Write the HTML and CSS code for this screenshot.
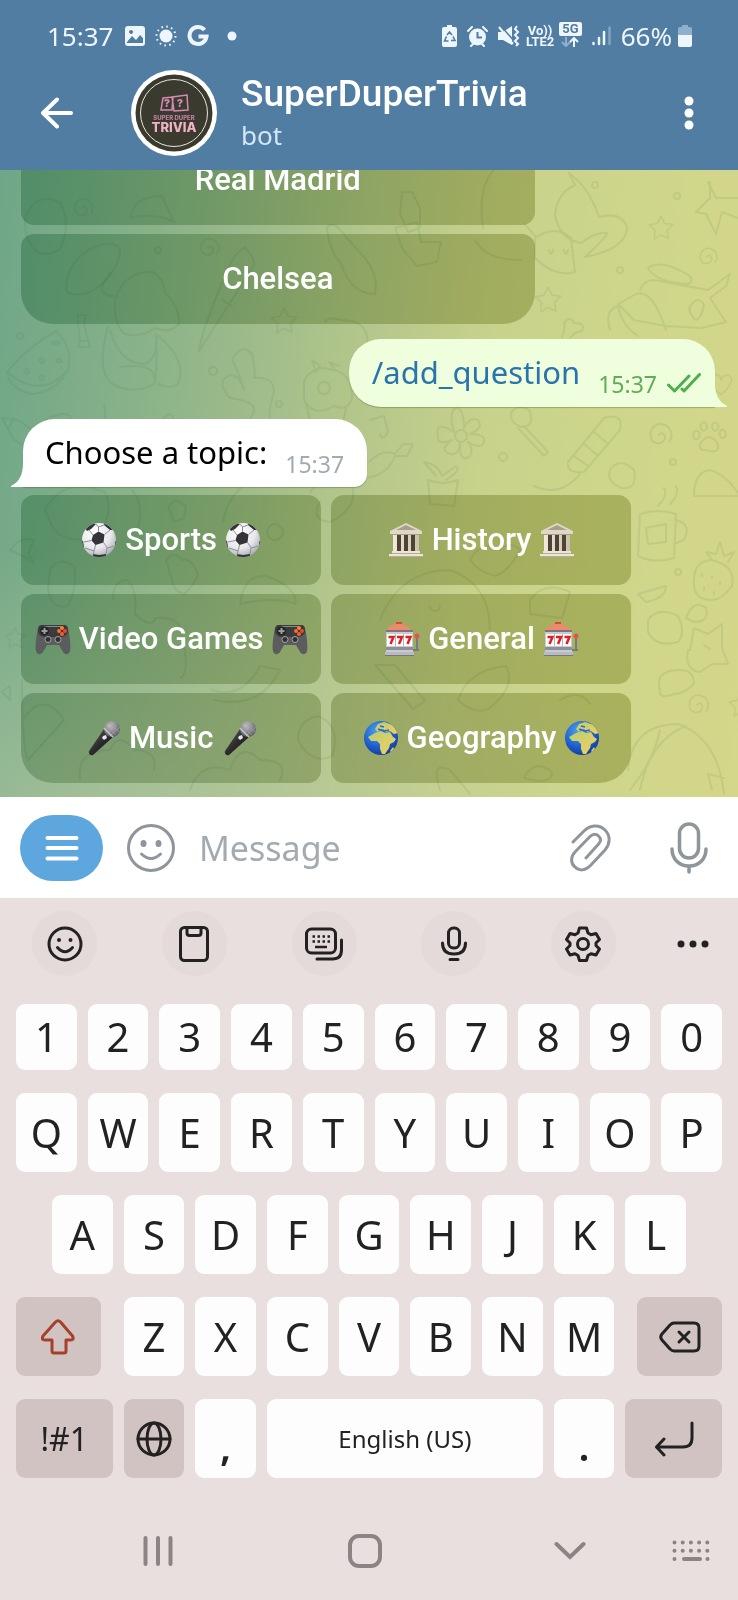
FILE: index.html
```html
<!DOCTYPE html>
<html lang="en">
<head>
<meta charset="utf-8">
<meta name="viewport" content="width=device-width, initial-scale=1">
<title>SuperDuperTrivia</title>
<link rel="stylesheet" href="styles.css">
</head>
<body>
<svg class="defs" aria-hidden="true">
  <defs>
    <radialGradient id="ballShade" cx=".4" cy=".3" r=".75"><stop offset="0" stop-color="#fff"/><stop offset=".6" stop-color="#e9e9ec"/><stop offset="1" stop-color="#a5a5ac"/></radialGradient>
    <radialGradient id="seaShade" cx=".4" cy=".3" r=".75"><stop offset="0" stop-color="#4fa3e8"/><stop offset=".6" stop-color="#1f5fd0"/><stop offset="1" stop-color="#123a94"/></radialGradient>
    <linearGradient id="landShade" x1="0" y1="0" x2="1" y2="1"><stop offset="0" stop-color="#b9cf72"/><stop offset="1" stop-color="#f2cf63"/></linearGradient>
    <linearGradient id="stoneShade" x1="0" y1="0" x2="1" y2="0"><stop offset="0" stop-color="#f1eadb"/><stop offset="1" stop-color="#c9c0ab"/></linearGradient>
    <linearGradient id="handleShade" x1="0" y1="0" x2="1" y2="1"><stop offset="0" stop-color="#6d6d70"/><stop offset=".5" stop-color="#2c2c2f"/><stop offset="1" stop-color="#111"/></linearGradient>
    <radialGradient id="micShade" cx=".4" cy=".3" r=".7"><stop offset="0" stop-color="#c4c4c8"/><stop offset="1" stop-color="#5e5e63"/></radialGradient>
    <clipPath id="ballClip"><circle cx="18" cy="18" r="17"/></clipPath>
    <symbol id="ball" viewBox="0 0 36 36">
      <circle cx="18" cy="18" r="17" fill="url(#ballShade)"/>
      <g clip-path="url(#ballClip)">
        <path fill="#34353b" d="M12 13l5.500-3.500 6 3-1 8-8 2.500-4-4.500zM10 0l5 2-5 5-4 2-3-5zM24 0l-1 3 6 5 4 0 0-8zM-1 17l3 2 1 6-2 4-3-4zM37 16l-3 4 0 5 4 1zM12 32l6 1 7-1 0 4-13 0z"/>
        <path fill="none" stroke="#8c8d93" stroke-width="1" d="M12 13L8 8M17.500 9.500V5L15 2M17.500 5L23 3M23.500 12.500L29 8M22.500 20.500l4 5.500 7-2M14.500 23L13 29l-1 4M10.500 18.500L3 20M13 29l-9-3M26 26l-1 6"/>
      </g>
    </symbol>
    <symbol id="temple" viewBox="0 0 36 36">
      <path fill="#4e4335" d="M7 12h22v18H7z"/>
      <path fill="#dfd8c6" d="M18 1L34 9v3H2V9z"/><path fill="#a89f8b" d="M18 3l10 5H8zM4 12h28v1H4z"/>
      <path fill="url(#stoneShade)" d="M5 13h4v17H5zM13 13h3v17h-3zM20 13h3v17h-3zM27 13h4v17h-4z"/>
      <path fill="#ede6d6" d="M4 29h28v3H4zM1 32h34v3H1z"/><path fill="#b6ad98" d="M4 31h28v1H4zM1 34h34v1H1z"/>
    </symbol>
    <symbol id="pad" viewBox="0 0 36 36">
      <path fill="#5a5c5e" d="M7 4h22c3 0 4 2 5 8 1 7 2 14 1 18-1 4-5 4-7 1l-4-7H12l-4 7c-2 3-6 3-7-1-1-4 0-11 1-18C3 6 4 4 7 4z"/>
      <path fill="#3a3b3d" d="M7 4h22c3 0 4 2 4 6 0 4-4 6-8 6H11c-4 0-8-2-8-6 0-4 1-6 4-6z"/>
      <path fill="#88898c" d="M9 5h18v1H9z"/>
      <circle cx="9.500" cy="10" r="4.500" fill="#232426"/><path stroke="#9b9c9f" stroke-width="2" d="M9.500 7v6M6.500 10h6"/>
      <circle cx="27" cy="7" r="2" fill="#ff7a3c"/><circle cx="27" cy="13" r="2" fill="#ff5a24"/><circle cx="24" cy="10" r="2" fill="#ff6a30"/><circle cx="30" cy="10" r="2" fill="#e84a1c"/>
      <g fill="#303133" stroke="#a3a4a7"><circle cx="13" cy="18.500" r="3"/><circle cx="23" cy="18.500" r="3"/></g>
    </symbol>
    <symbol id="slots" viewBox="0 0 36 36">
      <path fill="#d9483b" d="M12 1h6v4h-6z"/>
      <path fill="#ee8a6c" d="M3 10c1-5 6-7 12-7s11 2 12 7z"/><path fill="#77777d" d="M2 9h27v2H2z"/>
      <path fill="#c9cbd0" d="M2 11h27v20H2z"/><path fill="#fff" d="M3 13h25v12H3z"/>
      <path stroke="#b4b6bc" d="M11.500 13v12M19.500 13v12"/>
      <path fill="none" stroke="#e01f1f" stroke-width="2.500" d="M4.500 16h5l-3 7M13 16h5l-3 7M21.500 16h5l-3 7"/>
      <path fill="#8d9097" d="M2 26h27v3H2z"/><path fill="#b9bbc2" d="M1 31h29v4H1z"/><path fill="#75777e" d="M1 34h29v1H1z"/>
      <path stroke="#777a82" stroke-width="2" d="M33 16v12M29 29h6"/><circle cx="33" cy="15" r="2.500" fill="#e2564a"/>
    </symbol>
    <symbol id="mic" viewBox="0 0 36 36">
      <path fill="url(#handleShade)" d="M19 9l9 8L8 35c-2 1-5-1-4-4z"/>
      <circle cx="27" cy="9" r="8" fill="url(#micShade)"/>
      <path fill="none" stroke="#9a9aa0" stroke-width=".7" d="M21 6l10 9M24 3l10 9M21 12L31 2M25 16L35 7"/>
      <path stroke="#c3c3c7" stroke-width="1.500" d="M19 8l9 9"/><path fill="#e7e7ea" d="M18 16l3-1 1 3-3 2-2-2z"/>
    </symbol>
    <symbol id="globe" viewBox="0 0 36 36">
      <circle cx="18" cy="18" r="17" fill="url(#seaShade)"/>
      <g clip-path="url(#ballClip)" fill="url(#landShade)">
        <path d="M12 13l6-2 4 2 5-1 3 5 3 2-2 3-4 2-1 4-4 6-3 0-2-5 0-5-3-3-6 0-3-4z"/>
        <path d="M12 9l3-5 6-2 9 3 5 8-4 1-4-3-4 1-3-3-4 1-1 2z"/><path d="M27 31l3-4 1 2-2 4z"/>
      </g>
      <path fill="none" stroke="#2a68cc" stroke-width="1.500" d="M15 9l6 2 5-1M17 6l4 1"/>
    </symbol>
    <symbol id="dStar" viewBox="-20 -20 40 40"><path d="M0-16l5 10 11 1-8 8 2 11-10-5-9 6 1-12-8-7 11-2z"/></symbol>
    <symbol id="dSwirl" viewBox="-20 -20 40 40"><path d="M0 0c3-5 9 1 5 6S-9 9-9 0-2-13 5-11s11 11 6 18"/></symbol>
    <symbol id="dHeart" viewBox="-20 -20 40 40"><path d="M0 14C-22 0-14-16-4-12 0-10 0-6 0-5c2-9 14-9 14 0 0 6-8 14-14 19z"/></symbol>
    <symbol id="dPaw" viewBox="-20 -20 40 40"><path d="M-7 12c-5-4 1-10 6-12 6 0 12 7 9 12-3 4-10 0-15 0z"/><ellipse cx="-12" cy="-2" rx="3" ry="4"/><ellipse cx="-5" cy="-10" rx="3" ry="4"/><ellipse cx="6" cy="-10" rx="3" ry="4"/><ellipse cx="13" cy="-3" rx="3" ry="4"/></symbol>
  </defs>
</svg>

<header class="header">
  <div class="status">
    <span class="clock">15:37</span>
    <svg width="20" height="20" viewBox="0 0 20 20"><path fill="#eef6fd" fill-rule="evenodd" d="M3 0h14a3 3 0 0 1 3 3v14a3 3 0 0 1-3 3H3a3 3 0 0 1-3-3V3a3 3 0 0 1 3-3zM2 16l5-6 4 4 4-5 3 3v5H2zM6 4a2 2 0 1 0 .1 0z"/></svg>
    <svg width="22" height="22" viewBox="0 0 22 22"><circle cx="11" cy="11" r="6.500" fill="#eef6fd"/><circle cx="11" cy="11" r="9.500" fill="none" stroke="#eef6fd" stroke-width="2" stroke-dasharray="1.600 3.370"/></svg>
    <svg width="22" height="22" viewBox="0 0 22 22"><path fill="none" stroke="#eef6fd" stroke-width="4" d="M17.500 5A8.500 8.500 0 1 0 19.500 11.500H11.500"/></svg>
    <svg class="status-dot" width="10" height="10" viewBox="0 0 10 10"><circle cx="5" cy="5" r="4.500" fill="#eef6fd"/></svg>
    <span class="spacer"></span>
    <svg width="15" height="22" viewBox="0 0 15 22"><path fill="#eef6fd" d="M5 0h5v2h3a2 2 0 0 1 2 2v16a2 2 0 0 1-2 2H2a2 2 0 0 1-2-2V4a2 2 0 0 1 2-2h3z"/><path fill="none" stroke="#517da2" stroke-width="1.600" d="M5 10l2.500-3L10 10M11 11.500l2 4h-4M6.500 16H2.500l2-4.500"/></svg>
    <svg width="21" height="21" viewBox="0 0 21 21"><circle cx="10.500" cy="11" r="8.500" fill="#eef6fd"/><path stroke="#eef6fd" stroke-width="2" stroke-linecap="round" d="M1 5l4-4M20 5l-4-4M4 20l2-2M17 20l-2-2"/><path fill="none" stroke="#517da2" stroke-width="2" d="M10.500 6v5.500H15"/></svg>
    <svg width="22" height="22" viewBox="0 0 22 22"><path fill="#eef6fd" d="M0 7h5l9-6v19l-9-5H0z"/><path stroke="#517da2" stroke-width="1.500" d="M3 1l14 16"/><path stroke="#eef6fd" stroke-width="2" d="M1 2l14 17"/><path fill="none" stroke="#eef6fd" stroke-width="2" d="M19 1l-2 3 3 3-3 3 3 3-3 3 3 3-2 2"/></svg>
    <span class="volte"><span>Vo))</span><span>LTE2</span></span>
    <span class="fiveg"><b>5G</b><svg width="18" height="10" viewBox="0 0 18 10"><path fill="none" stroke="#8fb0cc" stroke-width="2" d="M5 0v8M1 5l4 4 4-4"/><path fill="none" stroke="#eef6fd" stroke-width="2" d="M13 10V2M9 5l4-4 4 4"/></svg></span>
    <svg width="19" height="20" viewBox="0 0 19 20"><path stroke="#eef6fd" stroke-width="2.500" stroke-linecap="round" d="M1.500 17v1M7 12v6M12 6v12"/><path stroke="#83a5c2" stroke-width="2.500" stroke-linecap="round" d="M17.500 1.500V18"/></svg>
    <span class="percent">66%</span>
    <svg width="14" height="22" viewBox="0 0 14 22"><path fill="#8fb0cc" d="M4 0h6v2h2a2 2 0 0 1 2 2v8H0V4a2 2 0 0 1 2-2h2z"/><path fill="#eef6fd" d="M0 10h14v10a2 2 0 0 1-2 2H2a2 2 0 0 1-2-2z"/></svg>
  </div>
  <div class="appbar">
    <button class="plain back" aria-label="Back"><svg width="34" height="32" viewBox="0 0 34 32"><path fill="none" stroke="#fff" stroke-width="4" stroke-linecap="round" stroke-linejoin="round" d="M31 16H3M17 2.500L3 16l14 13.500"/></svg></button>
    <svg class="avatar" width="86" height="86" viewBox="0 0 86 86" role="img" aria-label="Super Duper Trivia logo">
      <circle cx="43" cy="43" r="43" fill="#fff"/><circle cx="43" cy="43" r="38.500" fill="#3b3a2e"/><circle cx="43" cy="43" r="33.500" fill="none" stroke="#e8e6dc"/>
      <g fill="none" stroke="#d58bb4" stroke-width="1.500"><path d="M32 28l10-1-1 13-11 0zM41 27l15-2 1 15-14 1z"/></g>
      <text class="logo-mark" x="36" y="37" fill="#d58bb4">?</text><text class="logo-mark" x="49" y="37" fill="#d58bb4">?</text>
      <text class="logo-small" x="43" y="50" fill="#c47ba4">SUPER DUPER</text>
      <text class="logo-big" x="43" y="62" fill="#f0b3c6">TRIVIA</text>
    </svg>
    <div class="who"><h1>SuperDuperTrivia</h1><p>bot</p></div>
    <button class="plain" aria-label="More options"><svg width="10" height="34" viewBox="0 0 10 34"><g fill="#fff"><circle cx="5" cy="5" r="4.500"/><circle cx="5" cy="17" r="4.500"/><circle cx="5" cy="29" r="4.500"/></g></svg></button>
  </div>
</header>

<main class="chat">
  <svg class="doodles" viewBox="0 170 738 627" preserveAspectRatio="xMidYMid slice" aria-hidden="true">
    <path d="M7 372Q30 345 56 331 75 350 67 372 55 392 32 394 10 390 7 372zM7 372Q40 400 66 372M24 371q4-5 5 1-2 5-5-1zM39 360q4-5 5 1-2 5-5-1zM56 360q5-3 6 1-4 3-6-1zM39 377q4-4 5 1-3 5-5-1zM52 343q5-4 8 0-4 3-8 0z"/>
    <path d="M115 300q10-30 38-28 10 5 12 20 16 18 14 32-10 10-24 4-14 10-30 6-12-10-10-34zM115 296q-24 0-4-24M108 326q-14 50 8 60 20 8 38-2 4-16 2-48M110 330q10 34 34 34 14-4 12-30M158 336q30 24 20 48-8 6-20 0M120 367q34-4 34 10"/>
    <path d="M66 290q0-30 30-44 20-6 24 4-2 26-30 42-18 6-24-2zM26 215q12-24 34-12 12 20 0 46-16 10-26 0-12-16-8-34zM130 218q4-22 32-22l12 26q-20-10-44-4z"/>
    <path d="M245 247q12 14 8 20l-54 84q2-20 30-84 4-12 16-20zM222 300l10 6"/>
    <path d="M250 418q14-16-20-20-14-16-2-22 10-4 16 14-6-20-12-30 10-18 20-6 4 20 2 24 20-2 20 14-6 20-4 26M78 315l8 0-2 8 4 18-8 0-2-18zM80 341l-2 6 12 0-2-8"/>
    <path d="M304 382q4-12 20-14l10 2q18 4 18 28-4 14-18 8-20 12-30-6zM316 372l-4-12 8 6zM335 370l-6-8 10 4M318 388a6 6 0 1 0 12 0 6 6 0 1 0-12 0M306 404l6 24 30 0 4-20M2 418l16 2 20 14M2 418l12 22 14 8M14 418q-4 8-6 10"/>
    <path d="M402 192l10 0 8 16 0 20-12 4-8-18zM395 228l22-6 4 20 20 0-4 20-20 4-14-16zM327 228q6-10 18 8l20 22q14 18 10 36-24 0-34-30-12-14-14-36z"/>
    <path d="M483 228q-6-40 12-60M555 215q2-22 20-30l-6-12q20 14 30 44 22-6 28 10 0 22-42 30 22-20 22-24-10-2-26 10-22-4-26-28zM535 238q20-14 36 0l4 34q-20 6-40-14zM549 250q2 8 4 0M564 250q2 8 4 0M535 236l-10-12M475 240q10 20 46 20"/>
    <path d="M708 182l8 16 22 0M738 218l-16-6-6 22-10-20-10-2 14-14 0-16M648 268q14-10 42 8 4 8-4 8-30-2-38-16zM640 290q4-10 14-10l54 10 22-16-4 12-16 12 16 24-24 6-36-2-32-6-16-16 18-10q16-6 30 36M690 306q10-12 14 0-4 14-8 14-8-6-6-14zM610 330q-6-20 8-24 4 20 20 30M562 337q4-10 2-14 6-8 10 0 12 0 8 8-8 0-14 10"/>
    <path d="M455 436a6 6 0 1 0 12 0 6 6 0 1 0-12 0M454 432q-20-12-16 4-2 10 14 4-14 10-2 14 8 2 10-10 0 20 10 12 4-6-2-14 14 8 16 0 2-8-14-8 14-6 8-14-8-4-14 8 0-20-8-20-8 4-2 24zM428 480q16 6 30 0l-4 26-24-2zM436 476l-12-14q14 2 18 14l14-10q6 4-10 14M369 462q14-14 26-8l8-10 10 0-6 12-12 0q-8 20-30 22M370 420l14-4 4 16q-6 10-8 2"/>
    <path d="M512 411q8-8 18 0 4 16-8 16-14-4-10-16zM524 426l24 26-4 4-26-28M568 462l36-44q20-6 16 12l-36 42q-18 2-16-10zM574 456l14 10M584 444l14 12M594 432l14 12M580 474q-20 24-46 12M610 470q10-14 24 0 4 20-12 18-16-6-12-18zM694 496q0-24 16-26 16 4 30 26z"/>
    <path d="M640 514q18-6 36 0l-2 44q-20 6-36-2zM676 520q16 4 8 20l-10 4M646 528l20-4 0 18-18 2zM658 506q10-10 6-18M670 504q10-10 6-18M694 580q0-18 16-20 26 4 22 26-10 14-20 14-20 0-18-20zM712 560l-6-8 10 2 4-12 4 14 10-4-6 10M702 574v2M712 576v2M720 582v2M704 588v2M714 592v2"/>
    <path d="M638 594l28-8q0 12-20 16zM648 620q10-14 30-4 8 16 0 26-22 6-30-10zM686 618q8-20 20-10 4 14-12 14zM690 650l4-22 14 6 14-10 0 24 6 16-16 0-12 8q-16-2-12-22zM704 645l6 4M660 690q-6-20 20-20 14 0 14 14-10 10-20 10-16 6-14-4zM628 770q4-46 50-46 40 14 46 70M660 730q-6 30-30 60M640 790q10-50 46-64M712 790l-4-16 16 4"/>
    <path d="M45 510q12-24 40-24l20 6q10 22-8 44-30 10-44-8zM132 490q12 14 6 38M223 522q4-24 24-40M168 506l8-6 10 6-2 12-10 4zM10 550q10-14 24-10l-6 14 6 8zM50 570q8-14 24-4 4 20-6 40-16 4-20-16zM113 600q0-20 14-20 10 8 8 34 18 16 20 4 30-2 26 20 10 30 0 40M166 560q8-10 16 0 8-4 16 14-4 12-14 20-10-2-12-14zM240 604q4-30 26-28 30 10 30 28-20-8-56 0zM212 690q30 10 48-24l20 4q-20 40-66 30M2 692l8-6 0 14zM22 680q0 70 6 80l36-40q-20-30-40-2"/>
    <path d="M80 780q-4-30 30-30 8-20 24 0 24 0 20 20M190 790q10-30 40-20 10-30 30-10 30 0 20 20M298 740q0-20 20-24 24 10 14 40-20 10-34-16M310 492q10-14 40-10 12 24-20 40-20-2-10-20M380 620q20-50 70-50 40 14 40 60M430 606a5 5 0 1 0 10 0M375 665l20 0 30 36-12 8zM458 700q10-30 48-34 10 20-14 40-14 12-34-6zM470 560q10-20 30-10 10-10 20 0-10 20-24 26-18-4-26-16M530 600q14-20 40-8l-8 26-32-4zM440 790q-10-30 10-20l20 24"/>
    <path d="M46 430q-4-14 10-14 6-4 14 0 2 14-12 14zM104 405q4 14-4 28M116 430q4-14 8 0M160 424q12-20 14 0M325 322q4-6 16-2 30 0 26 28M560 700q20-12 30 4M524 778q10-20 28-6 0 14-28 6z"/>
    <use href="#dStar" x="268" y="304" width="32" height="34"/><use href="#dStar" x="532" y="284" width="32" height="32"/><use href="#dStar" x="646" y="212" width="30" height="32"/><use href="#dStar" x="2" y="624" width="26" height="28"/><use href="#dStar" x="726" y="690" width="30" height="30"/>
    <use href="#dSwirl" x="66" y="192" width="32" height="32"/><use href="#dSwirl" x="192" y="232" width="32" height="32"/><use href="#dSwirl" x="692" y="242" width="30" height="30"/><use href="#dSwirl" x="640" y="416" width="38" height="38"/><use href="#dSwirl" x="680" y="688" width="34" height="34"/>
    <use href="#dPaw" x="688" y="416" width="42" height="42"/><use href="#dHeart" x="706" y="366" width="30" height="36"/>
    <g><circle cx="213" cy="371" r="4"/><circle cx="20" cy="336" r="3"/><circle cx="279" cy="404" r="3"/><circle cx="595" cy="185" r="3"/><circle cx="677" cy="196" r="3"/><circle cx="620" cy="270" r="3"/><circle cx="503" cy="457" r="4"/><circle cx="673" cy="462" r="3"/><circle cx="678" cy="572" r="3"/><circle cx="158" cy="250" r="3"/><circle cx="275" cy="532" r="8"/></g>
  </svg>

  <div class="thread">
    <div class="options options-single">
      <button class="option">Real Madrid</button>
      <button class="option">Chelsea</button>
    </div>
    <div class="bubble bubble-out">
      <a class="command" href="#add_question">/add_question</a>
      <span class="time">15:37</span>
      <svg class="ticks" width="34" height="20" viewBox="0 0 34 20" role="img" aria-label="Read"><path fill="none" stroke="#4fae4e" stroke-width="3" stroke-linecap="round" stroke-linejoin="round" d="M1.500 12l6 6L22 3M15 16l2 2L32.500 1.500"/></svg>
      <svg class="tail" width="13" height="36" viewBox="0 0 13 36"><path fill="#efffde" d="M0 0h1v12c0 12 4 19 12 23v1H0z"/></svg>
    </div>
    <div class="bubble bubble-in">
      <span class="text">Choose a topic:</span>
      <span class="time">15:37</span>
      <svg class="tail" width="13" height="36" viewBox="0 0 13 36"><path fill="#fff" d="M13 0h-1v12c0 12-4 19-12 23v1h13z"/></svg>
    </div>
    <div class="options options-double">
      <button class="option"><svg class="emoji"><use href="#ball"/></svg>Sports<svg class="emoji"><use href="#ball"/></svg></button>
      <button class="option"><svg class="emoji"><use href="#temple"/></svg>History<svg class="emoji"><use href="#temple"/></svg></button>
      <button class="option"><svg class="emoji"><use href="#pad"/></svg>Video Games<svg class="emoji"><use href="#pad"/></svg></button>
      <button class="option"><svg class="emoji"><use href="#slots"/></svg>General<svg class="emoji"><use href="#slots"/></svg></button>
      <button class="option"><svg class="emoji"><use href="#mic"/></svg>Music<svg class="emoji"><use href="#mic"/></svg></button>
      <button class="option"><svg class="emoji"><use href="#globe"/></svg>Geography<svg class="emoji"><use href="#globe"/></svg></button>
    </div>
  </div>
</main>

<form class="composer">
  <button type="button" class="menu" aria-label="Bot menu"><svg width="34" height="26" viewBox="0 0 34 26"><path stroke="#fff" stroke-width="4" stroke-linecap="round" d="M2.500 3h29M2.500 13h29M2.500 23.500h29"/></svg></button>
  <button type="button" class="plain" aria-label="Emoji"><svg width="48" height="48" viewBox="0 0 48 48"><g fill="none" stroke="#8e959b" stroke-width="3" stroke-linecap="round"><circle cx="24" cy="24" r="22.500"/><path d="M14.500 30q9.500 9 19 0"/></g><ellipse cx="16.500" cy="19.500" rx="3" ry="3.500" fill="#8e959b"/><ellipse cx="31.500" cy="19.500" rx="3" ry="3.500" fill="#8e959b"/></svg></button>
  <input class="field" type="text" placeholder="Message" aria-label="Message">
  <button type="button" class="plain attach" aria-label="Attach"><svg width="42" height="48" viewBox="0 0 42 48"><path fill="none" stroke="#8e959b" stroke-width="3" stroke-linecap="round" d="M3 18L14 7C20 1 29 0 35 6c6 6 5 14 0 20L20 42c-5 5-11 5-15 1-5-4-4-11 0-15L20 12.500c3-3 7-3 9 0 2 2 2 5 0 7L16 34"/></svg></button>
  <button type="button" class="plain" aria-label="Record voice"><svg width="38" height="52" viewBox="0 0 38 52"><g fill="none" stroke="#8e959b" stroke-width="3.500" stroke-linecap="round"><rect x="9.500" y="2" width="19" height="34" rx="9.500"/><path d="M2 27c0 10 7 17 17 17s17-7 17-17M19 44v6"/></g></svg></button>
</form>

<section class="keyboard" aria-label="Keyboard">
  <div class="tools">
    <button class="tool" aria-label="Emoji"><svg width="36" height="36" viewBox="0 0 36 36"><g class="ink"><circle cx="18" cy="18" r="16"/><path d="M10.500 21.500q7.500 8.500 15 0"/></g><circle cx="12" cy="14" r="2" fill="#222"/><circle cx="23.500" cy="14" r="2" fill="#222"/></svg></button>
    <button class="tool" aria-label="Clipboard"><svg width="32" height="36" viewBox="0 0 32 36"><g class="ink"><rect x="2.500" y="1.500" width="27" height="33" rx="4"/><path d="M9 2v5q0 2.500 2.500 2.500h9Q23 9.500 23 7V2"/></g></svg></button>
    <button class="tool" aria-label="Keyboard modes"><svg width="38" height="34" viewBox="0 0 38 34"><g class="ink"><rect x="1.500" y="2" width="29" height="24" rx="5"/><path d="M36.500 13v10q0 9-9 9H12"/></g><path stroke="#222" stroke-width="2.500" stroke-dasharray="2.500 2.500" d="M7.500 9.500h18M7.500 14.500h18"/><path stroke="#222" stroke-width="2.500" d="M10 20h12"/></svg></button>
    <button class="tool" aria-label="Voice typing"><svg width="28" height="36" viewBox="0 0 28 36"><g class="ink"><rect x="8.500" y="2" width="11" height="20" rx="5"/><path d="M2.500 17q0 11 11.500 11t11.500-11M10 33.500h8"/></g></svg></button>
    <button class="tool" aria-label="Keyboard settings"><svg width="36" height="36" viewBox="0 0 36 36"><g class="ink"><circle cx="18" cy="18" r="5.500"/><path d="M14.500 2h7l1.500 5 3 1.800 5-1.300 3.500 6L31 17v2.500l3.500 3.500-3.500 6-5-1.300-3 1.800-1.500 5h-7L13 29.500l-3-1.800L5 29l-3.500-6L5 19.500V17l-3.500-3.500 3.500-6 5 1.300L13 7z"/></g></svg></button>
    <button class="tool tool-more" aria-label="More"><svg width="32" height="8" viewBox="0 0 32 8"><g fill="#222"><circle cx="4" cy="4" r="3.500"/><circle cx="16" cy="4" r="3.500"/><circle cx="28" cy="4" r="3.500"/></g></svg></button>
  </div>
  <div class="keys">
    <div class="row row-digits"><button class="key">1</button><button class="key">2</button><button class="key">3</button><button class="key">4</button><button class="key">5</button><button class="key">6</button><button class="key">7</button><button class="key">8</button><button class="key">9</button><button class="key">0</button></div>
    <div class="row"><button class="key">Q</button><button class="key">W</button><button class="key">E</button><button class="key">R</button><button class="key">T</button><button class="key">Y</button><button class="key">U</button><button class="key">I</button><button class="key">O</button><button class="key">P</button></div>
    <div class="row row-home"><button class="key">A</button><button class="key">S</button><button class="key">D</button><button class="key">F</button><button class="key">G</button><button class="key">H</button><button class="key">J</button><button class="key">K</button><button class="key">L</button></div>
    <div class="row"><button class="key key-wide key-dim key-shift" aria-label="Shift"><svg width="34" height="36" viewBox="0 0 34 36"><path fill="none" stroke="#a5402b" stroke-width="3" stroke-linejoin="round" d="M14.500 3q2.500-2.500 5 0l12 14q2 4-2 4H25v11q0 2-2 2H13q-2 0-2-2V21H4q-4 0-2-4z"/></svg></button><button class="key">Z</button><button class="key">X</button><button class="key">C</button><button class="key">V</button><button class="key">B</button><button class="key">N</button><button class="key">M</button><button class="key key-wide key-dim key-delete" aria-label="Delete"><svg width="42" height="32" viewBox="0 0 42 32"><g class="ink"><path d="M15 2h20q5 0 5 5v18q0 5-5 5H15q-2 0-4-2L3 19q-2.500-3 0-6l8-9q2-2 4-2z"/><path d="M20 11l10 10M30 11L20 21"/></g></svg></button></div>
    <div class="row"><button class="key key-wide key-dim key-symbols">!#1</button><button class="key key-dim" aria-label="Language"><svg width="36" height="36" viewBox="0 0 36 36"><g class="ink"><circle cx="18" cy="18" r="16"/><ellipse cx="18" cy="18" rx="7" ry="16"/><path d="M2 18h32"/></g></svg></button><button class="key key-point">,</button><button class="key key-space">English (US)</button><button class="key key-point">.</button><button class="key key-wide key-dim" aria-label="Enter"><svg width="40" height="36" viewBox="0 0 40 36"><path class="ink" d="M38 2v15q0 9-9 9H3M10 18L2.500 26l7.500 8"/></svg></button></div>
  </div>
  <nav class="nav">
    <button class="plain nav-recents" aria-label="Recent apps"><svg width="30" height="32" viewBox="0 0 30 32"><path stroke="#8b8384" stroke-width="4" stroke-linecap="round" d="M2.500 3v26M15 3v26M27.500 3v26"/></svg></button>
    <button class="plain" aria-label="Home"><svg width="34" height="34" viewBox="0 0 34 34"><rect x="2" y="2" width="30" height="30" rx="9" fill="none" stroke="#8b8384" stroke-width="4"/></svg></button>
    <button class="plain" aria-label="Back"><svg width="32" height="20" viewBox="0 0 32 20"><path fill="none" stroke="#8b8384" stroke-width="4" stroke-linecap="round" stroke-linejoin="miter" d="M2.500 3L16 16 29.500 3"/></svg></button>
    <button class="plain nav-keyboard" aria-label="Switch keyboard"><svg width="38" height="22" viewBox="0 0 38 22"><g stroke="#8b8384" stroke-width="4" stroke-linecap="round"><path stroke-dasharray="0 8.200" d="M2.500 2.500h34M2.500 10.800h34"/><path d="M2.500 19h0M12 19h16M35.500 19h0"/></g></svg></button>
  </nav>
</section>
</body>
</html>
```
FILE: styles.css
```css
*,
*::before,
*::after {
  box-sizing: border-box;
}

body {
  margin: 0;
  min-height: 100vh;
  display: flex;
  flex-direction: column;
  font-family: "Noto Sans", "Open Sans", sans-serif;
  background: #e8dfde;
}

svg {
  display: block;
  flex: none;
}

button {
  border: 0;
  padding: 0;
  font: inherit;
  color: inherit;
  cursor: pointer;
}

.plain {
  background: none;
  flex: none;
}

.defs {
  position: absolute;
  width: 0;
  height: 0;
}

.spacer {
  flex: 1;
}

/* Header */

.header {
  background: #517da2;
  color: #fff;
  padding-bottom: 14px;
}

.status {
  display: flex;
  align-items: center;
  gap: 10px;
  padding: 20px 46px 0 47px;
  height: 52px;
  color: #eef6fd;
}

.clock,
.percent {
  font-size: 26px;
  line-height: 32px;
}

.clock {
  margin-right: 2px;
}

.percent {
  margin-right: -4px;
}

.status-dot {
  margin-left: 8px;
}

.volte {
  display: flex;
  flex-direction: column;
  align-items: center;
  margin: 0 -5px 0 -4px;
  font: 700 13px/11px Roboto, sans-serif;
}

.fiveg {
  display: flex;
  flex-direction: column;
  align-items: center;
  gap: 1px;
  margin-top: -4px;
}

.fiveg b {
  padding: 0 3px;
  border-radius: 2px;
  background: #eef6fd;
  color: #517da2;
  font: 700 13px/14px Roboto, sans-serif;
}

.appbar {
  display: flex;
  align-items: center;
  padding: 18px 44px 0 40px;
}

.avatar {
  margin: 0 24px 0 57px;
}

.logo-mark,
.logo-small,
.logo-big {
  font-family: Inter, sans-serif;
  font-weight: 800;
  text-anchor: middle;
}

.logo-mark {
  font-size: 11px;
}

.logo-small {
  font-size: 6px;
}

.logo-big {
  font-size: 13px;
}

.who {
  flex: 1;
  min-width: 0;
}

.who h1 {
  margin: 0;
  font: 500 37px/44px Roboto, sans-serif;
}

.who p {
  margin: 0;
  font-size: 26px;
  line-height: 38px;
  color: #d2e6f6;
}

/* Conversation */

.chat {
  position: relative;
  flex: 1 1 0;
  min-height: 0;
  overflow: hidden;
  display: flex;
  flex-direction: column;
  justify-content: flex-end;
  background:
    radial-gradient(ellipse 75% 50% at 15% 110%, rgba(190, 205, 165, 0.6), rgba(190, 205, 165, 0)),
    linear-gradient(96deg, #6fa688 0%, #7bac88 10%, #95b78a 28%, #b3c68b 47%, #c8d28b 64%, #ced68b 80%, #d4d689 100%);
}

.doodles {
  position: absolute;
  inset: 0;
  width: 100%;
  height: 100%;
  fill: none;
  stroke: rgba(75, 110, 60, 0.11);
  stroke-width: 2;
  stroke-linejoin: round;
  stroke-linecap: round;
}

.thread {
  position: relative;
  display: flex;
  flex-direction: column;
  align-items: flex-start;
  padding: 0 23px 14px 21px;
}

.options {
  display: grid;
  gap: 9px 10px;
}

.options-single {
  width: 74%;
  grid-template-columns: 1fr;
}

.options-double {
  width: 88%;
  grid-template-columns: 1fr 1fr;
}

.option {
  display: flex;
  align-items: center;
  justify-content: center;
  gap: 8px;
  height: 90px;
  border-radius: 13px;
  background: rgba(0, 0, 0, 0.01);
  backdrop-filter: saturate(1.35) brightness(0.83);
  color: #fff;
  font: 500 31px/36px Roboto, sans-serif;
}

.options-single .option:last-child {
  border-radius: 13px 13px 32px 32px;
}

.options-double .option:nth-last-child(2) {
  border-bottom-left-radius: 32px;
}

.options-double .option:last-child {
  border-bottom-right-radius: 32px;
}

.emoji {
  width: 36px;
  height: 36px;
}

.bubble {
  position: relative;
  display: flex;
  align-items: flex-end;
  padding: 10px 23px 12px;
  font-size: 31px;
  line-height: 46px;
}

.bubble-in {
  margin: 12px 0 8px 2px;
  padding-left: 22px;
  border-radius: 32px 32px 13px 0;
  background: #fff;
  color: #000;
  box-shadow: 0 1px 1px rgba(60, 90, 40, 0.35);
}

.bubble-out {
  align-self: flex-end;
  margin-top: 15px;
  border-radius: 32px 32px 0 32px;
  background: #efffde;
  box-shadow: 0 1px 1px rgba(60, 90, 40, 0.35);
  padding-right: 14px;
}

.command {
  color: #2a74ad;
  text-decoration: none;
}

.time {
  margin-left: 18px;
  font-size: 23px;
  line-height: 22px;
  color: #a1aab3;
}

.bubble-out .time {
  color: #62ac55;
}

.ticks {
  margin: 0 0 2px 10px;
}

.tail {
  position: absolute;
  bottom: 0;
}

.bubble-in .tail {
  left: -12px;
}

.bubble-out .tail {
  right: -12px;
}

/* Message box */

.composer {
  display: flex;
  align-items: center;
  gap: 24px;
  padding: 18px 30px 17px 20px;
  background: #fff;
}

.menu {
  flex: none;
  display: grid;
  place-items: center;
  width: 83px;
  height: 66px;
  border-radius: 33px;
  background: #5ea6de;
}

.field {
  flex: 1;
  min-width: 0;
  border: 0;
  padding: 0;
  outline: 0;
  background: none;
  font: 400 34px/46px "Noto Sans", "Open Sans", sans-serif;
  color: #000;
}

.field::placeholder {
  color: #a3abb2;
  opacity: 1;
}

.attach {
  margin-right: 34px;
}

/* Keyboard */

.keyboard {
  background: #e8dfde;
  color: #222;
}

.ink {
  fill: none;
  stroke: #222;
  stroke-width: 3;
  stroke-linecap: round;
  stroke-linejoin: round;
}

.tools {
  display: grid;
  grid-template-columns: repeat(5, 13fr) 9fr;
  justify-items: center;
  padding: 13px 0 28px;
}

.tool {
  display: grid;
  place-items: center;
  width: 65px;
  height: 65px;
  border-radius: 50%;
  background: #e4dad9;
}

.tool-more {
  background: none;
}

.keys {
  display: flex;
  flex-direction: column;
  gap: 23px;
  padding: 0 16px;
}

.row {
  display: grid;
  grid-template-columns: repeat(20, 1fr);
  column-gap: 11px;
}

.key {
  grid-column: span 2;
  display: grid;
  place-items: center;
  height: 79px;
  border-radius: 9px;
  background: #fdfdfd;
  font-size: 40px;
  line-height: 48px;
}

.row-digits .key {
  height: 66px;
}

.row-home .key:first-child {
  grid-column: 2 / span 2;
}

.key-wide {
  grid-column: span 3;
}

.key-dim {
  background: #d1c3c2;
}

.key-shift {
  margin-right: 12px;
}

.key-delete {
  margin-left: 12px;
}

.key-symbols {
  font-size: 32px;
}

.key-point {
  padding-top: 14px;
  font-weight: 600;
}

.key-space {
  grid-column: span 8;
  font-size: 24px;
}

/* System navigation */

.nav {
  display: grid;
  grid-template-columns: 54fr 207fr 207fr 204fr 66fr;
  justify-items: center;
  align-items: center;
  padding: 49px 0 25px;
}

.nav .plain {
  display: grid;
  align-items: center;
  height: 48px;
}

.nav-recents {
  grid-column: 2;
}

.nav-keyboard {
  justify-self: start;
}
```
